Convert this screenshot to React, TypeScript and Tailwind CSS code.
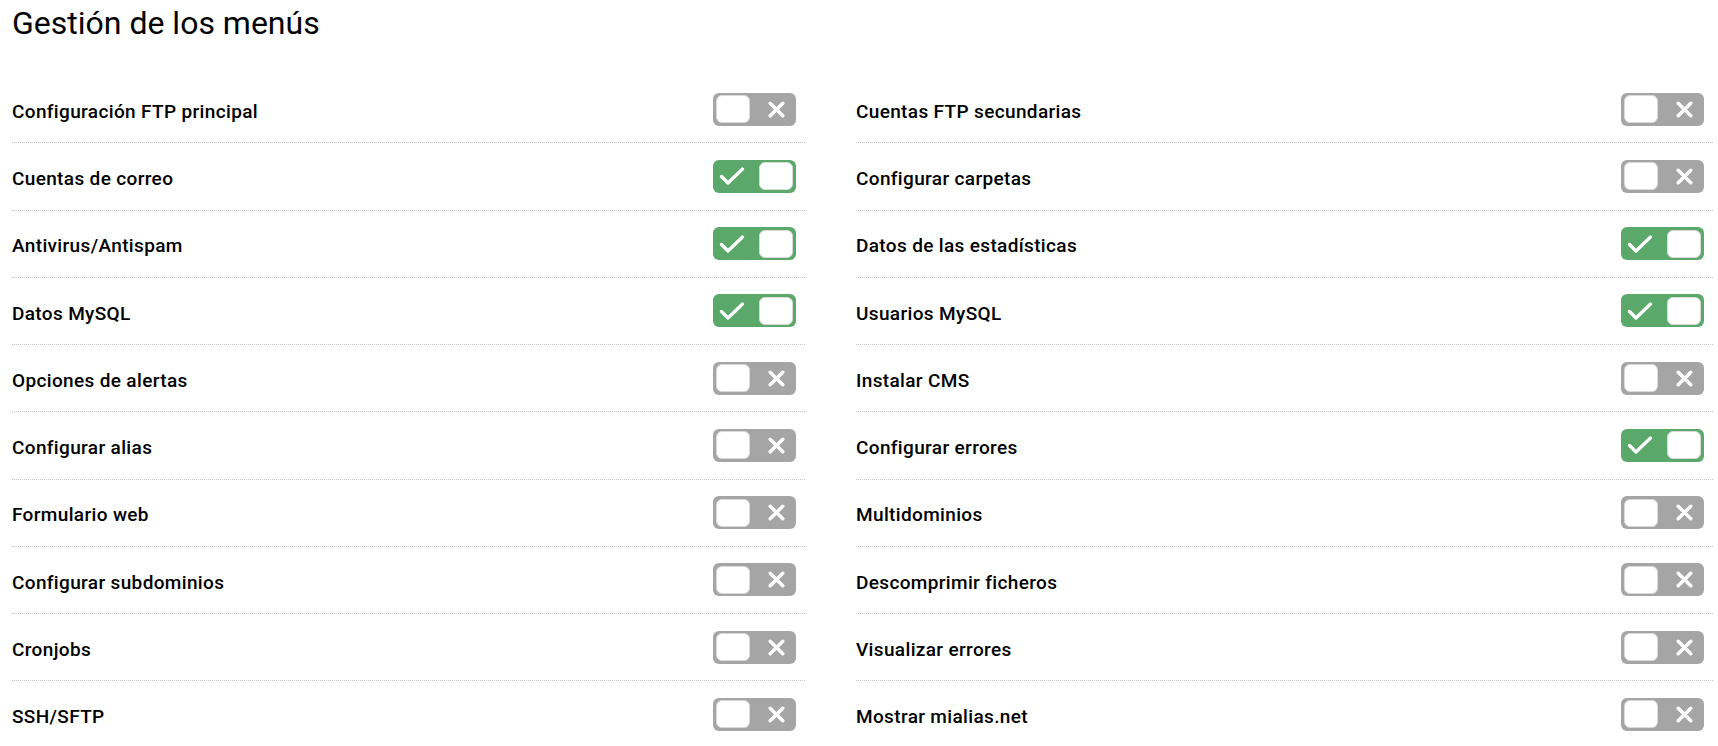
import React from "react";

type Item = { label: string; on: boolean };

const left: Item[] = [
  { label: "Configuración FTP principal", on: false },
  { label: "Cuentas de correo", on: true },
  { label: "Antivirus/Antispam", on: true },
  { label: "Datos MySQL", on: true },
  { label: "Opciones de alertas", on: false },
  { label: "Configurar alias", on: false },
  { label: "Formulario web", on: false },
  { label: "Configurar subdominios", on: false },
  { label: "Cronjobs", on: false },
  { label: "SSH/SFTP", on: false },
];

const right: Item[] = [
  { label: "Cuentas FTP secundarias", on: false },
  { label: "Configurar carpetas", on: false },
  { label: "Datos de las estadísticas", on: true },
  { label: "Usuarios MySQL", on: true },
  { label: "Instalar CMS", on: false },
  { label: "Configurar errores", on: true },
  { label: "Multidominios", on: false },
  { label: "Descomprimir ficheros", on: false },
  { label: "Visualizar errores", on: false },
  { label: "Mostrar mialias.net", on: false },
];

const Toggle = ({ on }: { on: boolean }) => {
  return (
    <div
      className={`flex items-center w-[83px] h-[33px] rounded-[6px] p-[3px] ${
        on ? "bg-[#5ba86b] flex-row-reverse" : "bg-[#a5a5a5]"
      }`}
    >
      {/* knob */}
      <div className="w-[34px] h-[28px] rounded-[6px] bg-white border border-[#d9d9d9]" />
      {on ? (
        <div className="flex-1 flex items-center justify-start pl-[3px]">
          <svg viewBox="0 0 26 18" className="w-[26px] h-[18px]" fill="none" stroke="white" strokeWidth="3.2" strokeLinecap="round" strokeLinejoin="round">
            <polyline points="2.5,9.5 9,16 23.5,2" />
          </svg>
        </div>
      ) : (
        <div className="flex-1 flex items-center justify-end pr-[8px]">
          <svg viewBox="0 0 17 17" className="w-[17px] h-[17px]" fill="none" stroke="white" strokeWidth="3.4" strokeLinecap="round">
            <line x1="2.2" y1="2.2" x2="14.8" y2="14.8" />
            <line x1="14.8" y1="2.2" x2="2.2" y2="14.8" />
          </svg>
        </div>
      )}
    </div>
  );
};

const Column = ({ items }: { items: Item[] }) => (
  <div className="flex flex-col">
    {items.map((it) => (
      <div
        key={it.label}
        className="flex items-center justify-between h-[67.25px] border-b border-dotted border-[#c4c4c4] pr-[9px]"
      >
        <span className="pt-[6px] text-[19px] tracking-[0.35px] font-medium text-black">{it.label}</span>
        <Toggle on={it.on} />
      </div>
    ))}
  </div>
);

export default function App() {
  return (
    <div className="w-[1718px] h-[746px] overflow-hidden bg-white pl-3 font-['Roboto',sans-serif]">
      <h1 className="pt-[5px] pb-[35px] text-[32px] leading-[36px] font-normal text-black">
        Gestión de los menús
      </h1>
      <div className="grid grid-cols-[793px_857px] gap-x-[51px]">
        <Column items={left} />
        <Column items={right} />
      </div>
    </div>
  );
}
